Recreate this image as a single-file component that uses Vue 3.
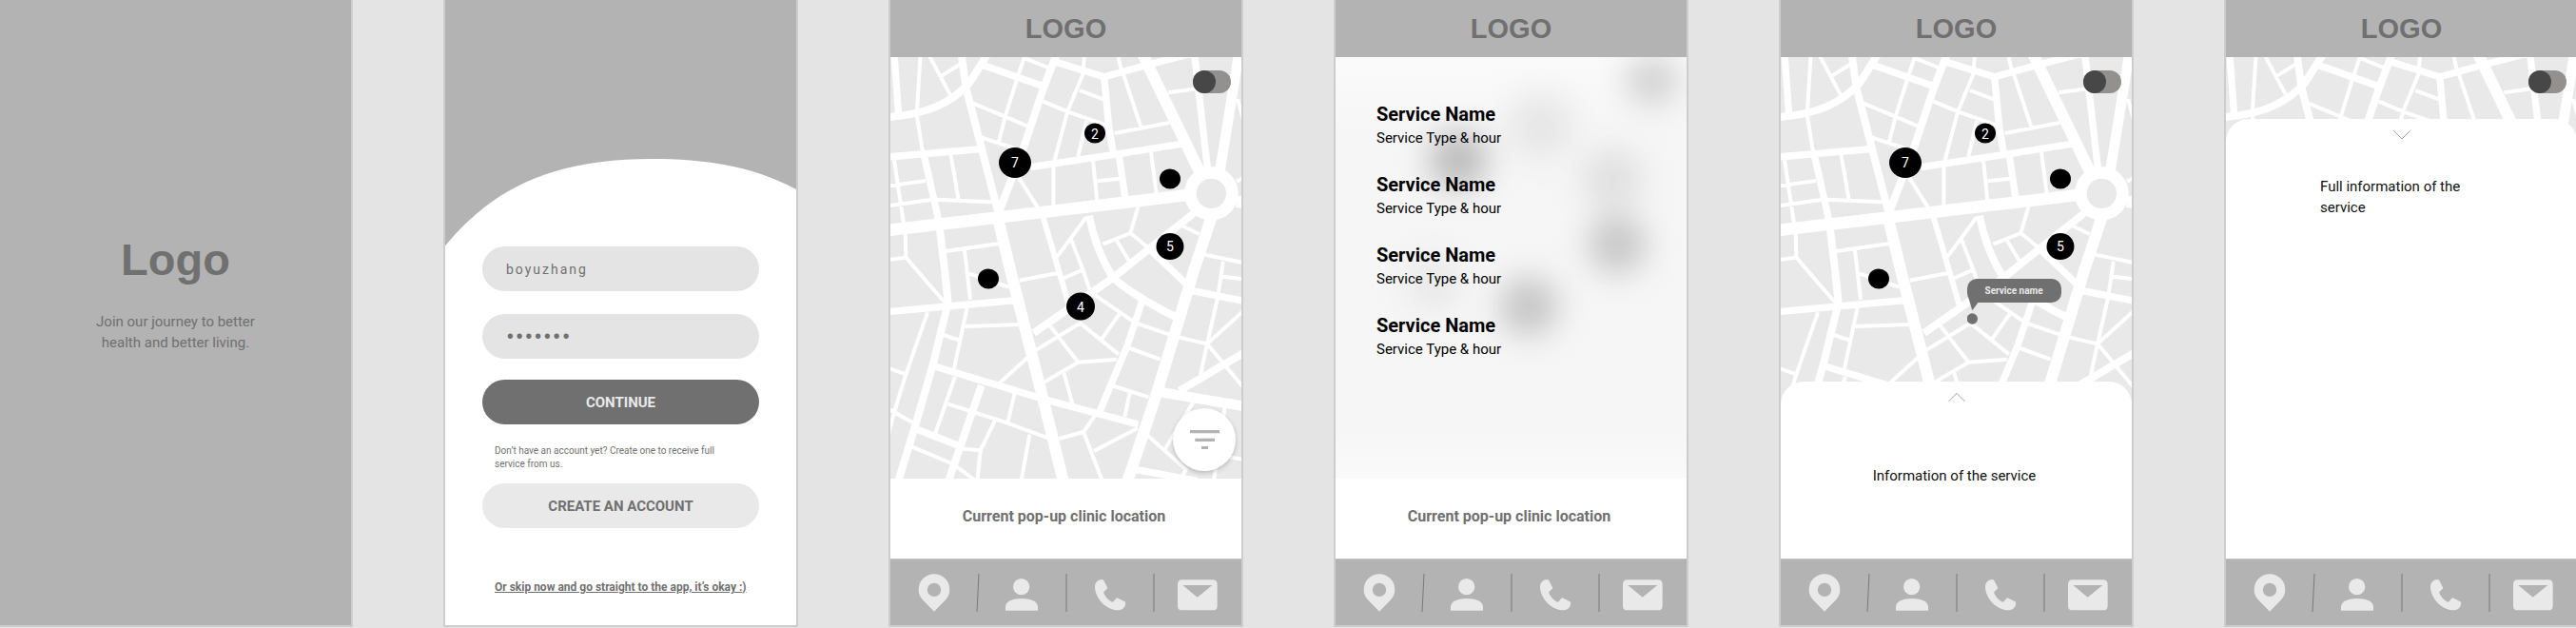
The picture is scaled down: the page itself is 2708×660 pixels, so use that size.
<script setup>
import { ref } from 'vue'

const username = ref('boyuzhang')
const password = ref('clinic7')

const screens = [
  { id: 'map', kind: 'map' },
  { id: 'list', kind: 'list' },
  { id: 'preview', kind: 'preview' },
  { id: 'details', kind: 'details' },
]

const services = [1, 2, 3, 4]

const MAP_W = 369
const MAP_H = 443

const pins = [
  { x: 131, y: 111, w: 34, h: 32, label: '7' },
  { x: 215, y: 80, w: 22, h: 21, label: '2' },
  { x: 294, y: 128, w: 22, h: 21, label: '' },
  { x: 294, y: 199, w: 29, h: 28, label: '5' },
  { x: 103, y: 233, w: 22, h: 21, label: '' },
  { x: 200, y: 262, w: 30, h: 29, label: '4' },
]

function pinsFor(kind) {
  return kind === 'map' ? pins : pins.filter((p) => p.label !== '4')
}

function pinStyle(p) {
  return {
    left: (p.x / MAP_W) * 100 + '%',
    top: (p.y / MAP_H) * 100 + '%',
    width: p.w + 'px',
    height: p.h + 'px',
  }
}

const haze = [
  { x: 333, y: 24, r: 28, c: '#d2d2d2' },
  { x: 216, y: 72, r: 34, c: '#e6e6e6' },
  { x: 129, y: 108, r: 31, c: '#bcbcbc' },
  { x: 291, y: 128, r: 32, c: '#e0e0e0' },
  { x: 296, y: 197, r: 31, c: '#c8c8c8' },
  { x: 103, y: 238, r: 28, c: '#e8e8e8' },
  { x: 203, y: 262, r: 31, c: '#c6c6c6' },
]

const roads = [
  { w: 38, d: 'M40 726 400 684 990 614 M1140 635 1170 639' },
  {
    w: 36,
    d: 'M843 170 1025 545 M385 680 431 870 530 1260 594 1520 M1062 680 1003 860 888 1240 795 1520',
  },
  { w: 32, d: 'M1150 150 1118 350 1087 540 M885 1234 1165 1281' },
  {
    w: 24,
    d: 'M40 370C170 358 240 325 298 260L358 165 M272 170 286 275 388 670 M574 165 530 280 470 460 388 675 M200 690 218 840 230 955 182 1150 130 1330 72 1520 M1005 672 755 872 500 1050 M675 680C690 760 715 820 750 875 800 920 870 960 945 998 M335 1215 230 1520 M960 1232 1170 1108',
  },
  {
    w: 22,
    d: 'M60 170 74 365 M152 480 200 695 M338 205 525 270 M568 195 722 242 850 207 1000 168 M722 240 737 400 753 492 M768 482 788 620 M1007 170 1048 530 M40 495 330 470 M490 527 755 487 972 453 M865 785 978 892 M40 983 440 947 M180 1153 530 1258 830 1338 M130 1353 268 1407 M842 950 795 1090 705 1305 M1000 917 1165 949 M820 1480 1015 1516',
  },
  { w: 18, d: 'M530 685 575 840 612 965' },
  {
    w: 12,
    d: 'M143 170 131 360 150 480 M168 170 240 305 M205 242 272 200 M300 322 410 368 480 397 M447 250 410 368 390 447 M330 432 438 467 M468 182 548 214 M472 176 445 255 M660 175 655 235 607 350 565 508 M530 320 607 352 738 398 M645 285 720 313 M667 382 640 492 M765 170 777 225 M783 235 838 400 M755 420 928 387 M925 292 1012 280 M1143 312 1162 380 M60 505 90 705 M40 586 160 570 M40 649 175 630 M190 629 368 637 M238 485 263 630 M1140 573 1165 558 M562 520 562 655 M450 555 515 658 M687 505 700 635 M700 571 772 563 M870 480 887 608 M955 705 1022 738 M830 650 805 735 718 770 M805 735 858 778 M762 758 800 822 M665 685 618 750 572 812 M618 755 655 850 682 930 M595 877 660 848 M455 884 580 860 M222 792 392 768 M282 790 300 945 M95 730 97 812 218 952 M40 819 97 812 M295 862 422 905 M290 970 248 1165 M280 1029 458 1023 M215 1056 264 1072 M165 985 97 1180 60 1300 42 1370 M40 1160 97 1180 M40 1288 118 1332 M252 1188 190 1365 M230 1274 400 1328 548 1382 M480 1128 390 1210 M440 1240 418 1332 M377 1328 332 1420 322 1520 M272 1415 332 1420 M115 1408 245 1463 320 1518 M487 1370 460 1520 M508 1103 648 1018 M550 1025 640 1142 M530 1207 640 1142 762 1133 M642 1015 768 1117 M770 990 714 1070 M690 928 812 1012 M820 1018 928 1055 M795 1095 898 1133 M745 1215 862 1252 M803 1240 787 1314 M595 1175 622 1272 M695 1308 657 1362 580 1383 M657 1362 718 1520 M690 1422 828 1350 M955 1063 1047 1084 M1080 940 1047 1084 1026 1182 M1047 1084 1162 980 M1047 1084 1162 1222 M1097 825 1082 928 M1095 872 1165 880 M1040 803 1165 829 M1003 1268 912 1420 M858 1372 980 1480 962 1515 M1105 1270 1068 1515 M1110 1440 1165 1449',
  },
]

const navItems = [
  { name: 'Locations', view: '125 308 126 120' },
  { name: 'Profile', view: '405 308 126 120' },
  { name: 'Call', view: '677 308 126 120' },
  { name: 'Messages', view: '958 308 126 120' },
]
</script>

<template>
  <main class="stage">
    <section class="screen splash" aria-label="Welcome">
      <h1 class="splash-logo">Logo</h1>
      <p class="splash-text">Join our journey to better<br />health and better living.</p>
    </section>

    <section class="screen login" aria-label="Log in">
      <svg class="login-hill" viewBox="54 0 1107 777" preserveAspectRatio="none" aria-hidden="true">
        <path d="M54 0H1161V597C1030 525 880 501 705 501 400 501 205 590 54 775Z" fill="#b3b3b3" />
      </svg>
      <form class="login-form" @submit.prevent>
        <input v-model="username" class="field" type="text" aria-label="User name" />
        <input v-model="password" class="field secret" type="password" aria-label="Password" />
        <button class="pill dark" type="submit">CONTINUE</button>
        <p class="hint">Don’t have an account yet? Create one to receive full service from us.</p>
        <button class="pill light" type="button">CREATE AN ACCOUNT</button>
        <a class="skip" href="#app">Or skip now and go straight to the app, it’s okay :)</a>
      </form>
    </section>

    <section v-for="s in screens" :key="s.id" class="screen" :aria-label="s.id">
      <header class="top">LOGO</header>

      <div class="body">
        <div v-if="s.kind !== 'list'" class="map">
          <svg class="streets" viewBox="48 180 1107 1329" aria-hidden="true">
            <rect x="48" y="180" width="1107" height="1329" fill="#e9e9e9" />
            <path
              v-for="r in roads"
              :key="r.w"
              :d="r.d"
              :stroke-width="r.w"
              fill="none"
              stroke="#fff"
              stroke-linejoin="round"
            />
            <circle cx="1060" cy="610" r="66" fill="#e9e9e9" stroke="#fff" stroke-width="38" />
          </svg>
          <template v-if="s.kind !== 'details'">
            <button v-for="(p, i) in pinsFor(s.kind)" :key="i" class="pin" type="button" :style="pinStyle(p)" aria-label="Clinics">
              {{ p.label }}
            </button>
          </template>
          <input class="switch" type="checkbox" role="switch" aria-label="Map or list view" />
          <div v-if="s.kind === 'preview'" class="callout">
            <span class="bubble">Service name</span>
            <svg class="tail" viewBox="0 0 36 84" aria-hidden="true">
              <path d="M4 0 16 40 34 15V0Z" fill="#707070" />
              <circle cx="16" cy="66" r="17" fill="#707070" />
            </svg>
          </div>
          <button v-if="s.kind === 'map'" class="filter" type="button" aria-label="Filter">
            <svg viewBox="0 0 93 61" aria-hidden="true">
              <path d="M0 0h93v10H0zM16 26h62v10H16zM36 51h21v10H36z" fill="#b3b3b3" />
            </svg>
          </button>
        </div>

        <div v-else class="list">
          <svg class="haze" viewBox="0 0 369 443" preserveAspectRatio="none" aria-hidden="true">
            <circle v-for="(b, i) in haze" :key="i" :cx="b.x" :cy="b.y" :r="b.r" :fill="b.c" />
          </svg>
          <ul class="services">
            <li v-for="n in services" :key="n">
              <h2>Service Name</h2>
              <p>Service Type &amp; hour</p>
            </li>
          </ul>
        </div>

        <p v-if="s.kind === 'map' || s.kind === 'list'" class="caption">Current pop-up clinic location</p>

        <article v-if="s.kind === 'preview'" class="sheet">
          <button class="grip" type="button" aria-label="Expand">
            <svg viewBox="0 0 54 28"><path d="M1 27 27 1 53 27" /></svg>
          </button>
          <p class="sheet-text">Information of the service</p>
        </article>

        <article v-if="s.kind === 'details'" class="sheet tall">
          <button class="grip" type="button" aria-label="Collapse">
            <svg viewBox="0 0 54 28"><path d="M1 1 27 27 53 1" /></svg>
          </button>
          <p class="sheet-text full">Full information of the service</p>
        </article>
      </div>

      <nav class="tabs" aria-label="Main">
        <template v-for="(item, i) in navItems" :key="item.name">
          <svg v-if="i > 0" class="divider" viewBox="0 0 4 40" aria-hidden="true">
            <path :d="i === 1 ? 'M3 0 1 40' : 'M2 0V40'" stroke="#787878" />
          </svg>
          <button class="tab" type="button" :aria-label="item.name">
            <svg :viewBox="item.view" fill="#e9e9e9" aria-hidden="true">
              <path
                v-if="i === 0"
                fill-rule="evenodd"
                d="M188 427 153 391C144 381 139 371 139 358A49 49 0 0 1 237 358C237 371 232 381 223 391ZM188 337A21 21 0 1 0 188 380 21 21 0 1 0 188 337Z"
              />
              <template v-if="i === 1">
                <circle cx="467" cy="349" r="26" />
                <path d="M417 424V412C417 396 440 386 468 386S519 396 519 412V424Z" />
              </template>
              <path
                v-if="i === 2"
                d="M692 348C692 336 702 326 714 326 718 326 720 328 721 331L732 353C729 359 719 362 720 369 723 379 738 395 747 397 752 396 756 387 762 384L785 395C789 397 789 401 788 406 784 418 773 424 760 423 724 419 692 384 692 348Z"
              />
              <path
                v-if="i === 3"
                fill-rule="evenodd"
                d="M972 327H1069Q1083 327 1083 341V409Q1083 423 1069 423H972Q958 423 958 409V341Q958 327 972 327ZM974 344 1020 382 1067 344Z"
              />
            </svg>
          </button>
        </template>
      </nav>
    </section>
  </main>
</template>

<style>
html,
body {
  margin: 0;
  overflow: hidden;
  background: #e4e4e4;
}
</style>

<style scoped>
.stage {
  display: grid;
  grid-template-columns: repeat(6, minmax(0, 1fr));
  gap: 95px;
  min-height: 100vh;
  margin: 0 -3px 0 -2px;
  padding-bottom: 1px;
  box-sizing: border-box;
  font-family: Roboto, "Liberation Sans", sans-serif;
  font-size: 15px;
  line-height: 22px;
  color: #707070;
}
.screen {
  display: flex;
  flex-direction: column;
  box-sizing: border-box;
  border: 2px solid #cdcdcd;
  border-top: 0;
  background: #fff;
}
h1,
h2,
p,
ul {
  margin: 0;
  padding: 0;
}
button {
  border: 0;
  padding: 0;
  font: inherit;
  color: inherit;
  background: none;
}

.splash {
  align-items: center;
  padding-top: 245px;
  background: #b3b3b3;
  text-align: center;
}
.splash-logo {
  font: bold 47px/56px "Liberation Sans", Arial, sans-serif;
}
.splash-text {
  margin-top: 26px;
}

.login-hill {
  display: block;
  width: 100%;
  height: 259px;
}
.login-form {
  display: flex;
  flex-direction: column;
  padding: 0 39px;
}
.field,
.pill {
  box-sizing: border-box;
  width: 100%;
  height: 47px;
  border: 0;
  border-radius: 24px;
}
.field {
  margin-bottom: 24px;
  padding: 0 25px;
  background: #e4e4e4;
  color: #707070;
  font: 14px/22px Roboto, sans-serif;
  letter-spacing: 2px;
  outline: 0;
}
.field.secret {
  margin-bottom: 22px;
  font-size: 26px;
  letter-spacing: 1px;
}
.pill {
  font-weight: bold;
}
.dark {
  background: #707070;
  color: #e9e9e9;
}
.light {
  background: #e9e9e9;
}
.hint {
  margin: 21px 13px 13px;
  font-size: 10px;
  line-height: 14px;
}
.skip {
  margin: 55px 13px 0;
  font-size: 12px;
  line-height: 14px;
  font-weight: bold;
  color: #707070;
  white-space: nowrap;
}

.top {
  background: #b3b3b3;
  font: bold 29px/60px "Liberation Sans", Arial, sans-serif;
  text-align: center;
}
.body {
  position: relative;
  display: flex;
  flex: 1;
  flex-direction: column;
}
.map,
.list {
  position: relative;
  aspect-ratio: 369 / 443;
  overflow: hidden;
}
.streets {
  display: block;
  width: 100%;
  height: 100%;
}
.pin {
  position: absolute;
  transform: translate(-50%, -50%);
  border-radius: 50%;
  background: #000;
  color: #fff;
  font-size: 14px;
  line-height: 20px;
}
.switch {
  position: absolute;
  top: 14px;
  right: 11px;
  width: 40px;
  height: 24px;
  margin: 0;
  appearance: none;
  border-radius: 12px;
  background: #929190;
}
.switch::before {
  content: "";
  display: block;
  width: 24px;
  height: 24px;
  border-radius: 50%;
  background: #474747;
}
.callout {
  position: absolute;
  left: 53%;
  top: 233px;
  width: 99px;
}
.bubble {
  display: block;
  border-radius: 10px;
  background: #707070;
  color: #e9e9e9;
  font-size: 10px;
  font-weight: bold;
  line-height: 25px;
  text-align: center;
}
.tail {
  display: block;
  width: 12px;
  height: 28px;
  margin-top: -5px;
}
.filter {
  position: absolute;
  right: 6px;
  bottom: 8px;
  display: grid;
  place-items: center;
  width: 66px;
  height: 66px;
  border-radius: 50%;
  background: #fff;
  box-shadow: 0 2px 5px rgba(0, 0, 0, 0.2);
}
.filter svg {
  width: 31px;
}
.caption {
  display: grid;
  flex: 1;
  place-items: center;
  padding: 0 4px 4px 0;
  font-size: 16px;
  font-weight: bold;
}

.list {
  background: linear-gradient(#fafafa, #f6f6f6 20%, #f6f6f6 88%, #fafafa);
}
.haze {
  position: absolute;
  inset: 0;
  width: 100%;
  height: 100%;
  filter: blur(16px);
}
.services {
  position: relative;
  display: grid;
  gap: 24px;
  padding: 48px 43px 0;
  list-style: none;
  color: #000;
}
.services h2 {
  font-size: 20px;
  line-height: 24px;
}
.services p {
  line-height: 26px;
}

.sheet {
  position: absolute;
  right: 0;
  bottom: 0;
  left: 0;
  height: 186px;
  border-radius: 24px 24px 0 0;
  background: #fff;
  color: #111;
}
.sheet.tall {
  height: 462px;
}
.grip {
  display: block;
  margin: 12px auto 0;
  line-height: 0;
}
.grip svg {
  width: 18px;
  fill: none;
  stroke: #707070;
  stroke-width: 2;
}
.sheet-text {
  margin-top: 67px;
  padding-right: 4px;
  text-align: center;
}
.sheet-text.full {
  width: 160px;
  margin: 39px 0 0 99px;
  text-align: left;
}

.tabs {
  display: flex;
  align-items: center;
  box-sizing: border-box;
  height: 70px;
  border-top: 1px solid #c2c2c2;
  background: #b3b3b3;
}
.tab {
  display: grid;
  flex: 1;
  place-items: center;
}
.tab svg {
  width: 42px;
  height: 40px;
}
.divider {
  width: 4px;
  height: 40px;
  margin: 0 -2px;
}
</style>
